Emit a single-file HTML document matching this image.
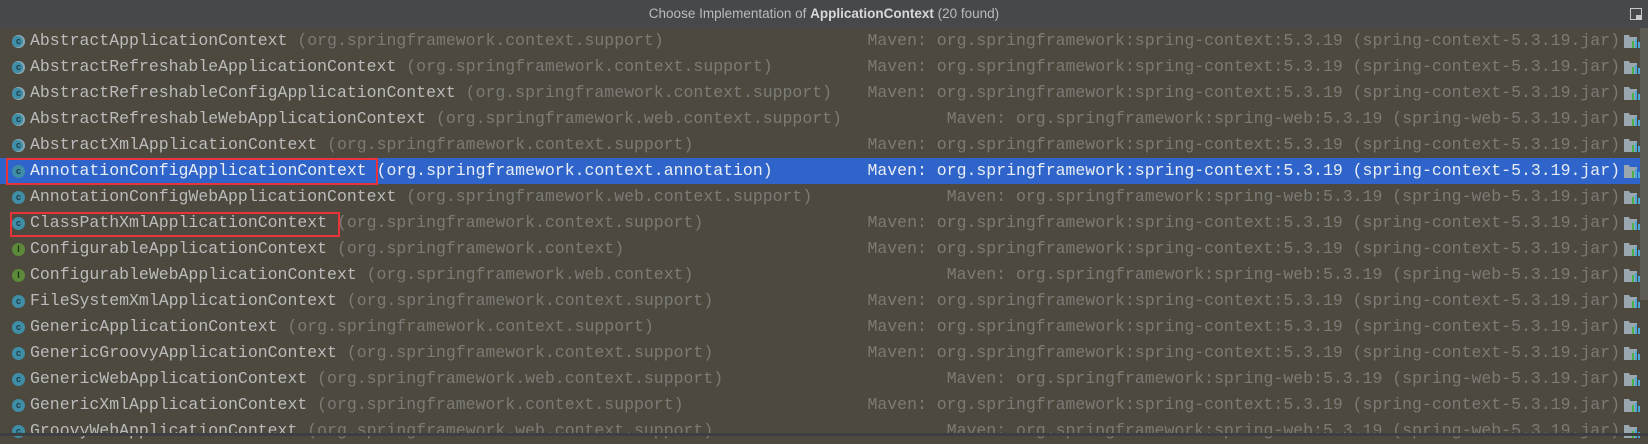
<!DOCTYPE html>
<html><head><meta charset="utf-8"><style>
*{margin:0;padding:0;box-sizing:border-box}
body{width:1648px;height:436px;overflow:hidden;background:#4d493f;position:relative;font-family:"Liberation Mono",monospace}
.hdr{position:absolute;left:0;top:0;width:1648px;height:28px;background:#46484c;color:#b9bbbe;font:13.5px "Liberation Sans","DejaVu Sans",sans-serif;text-align:center;line-height:28px}
.hdr b{color:#d8d8d8}
.pin{position:absolute;left:1630px;top:8px;width:12px;height:12px;border:1.5px solid #c8c8c8}
.pin:after{content:"";position:absolute;right:0;bottom:0;width:5px;height:4px;background:#c8c8c8}
.sb{position:absolute;left:1640px;top:28px;width:8px;height:272px;background:#5e5b54}
.bot{position:absolute;left:0;top:433px;width:1648px;height:3px;background:#3c3f41}
.row{position:absolute;left:0;width:1640px;height:26px;font-size:16.5px;line-height:26px;white-space:pre;color:#bbbbbb}
.row .n{position:absolute;left:30px}
.row .p{color:#7b7a74}
.row .r{position:absolute;right:20px;color:#7b7a74}
.sel{background:#2f65ca}
.sel .n,.sel .p,.sel .r{color:#e8ecf4}
.ic{position:absolute;left:12px;top:7px;width:13px;height:13px;border-radius:50%;background:#3d8ea6;color:#1d3a44;font:bold 9px "Liberation Sans",sans-serif;text-align:center;line-height:13px}
.ic.i{background:#5c8a3a;color:#1f3010}
.ic.a{box-shadow:-1px 0 0 1px #8aa6b0 inset}
.jar{position:absolute;right:0;top:6px;width:16px;height:14px}
.box{position:absolute;border:2px solid #e8333a}
</style></head><body>
<div class="hdr">Choose Implementation of <b>ApplicationContext</b> (20 found)</div>
<div class="pin"></div>
<div class="sb"></div>

<div class="row" style="top:28px"><span class="ic a">c</span><span class="n">AbstractApplicationContext <span class="p">(org.springframework.context.support)</span></span><span class="r">Maven: org.springframework:spring-context:5.3.19 (spring-context-5.3.19.jar)</span><svg class="jar" viewBox="0 0 16 14"><path d="M0 1h5l1 2h7v11H0z" fill="#9aa7b0"/><rect x="8" y="7" width="2" height="7" fill="#4ab04a"/><rect x="11" y="5" width="2" height="9" fill="#4aa8d8"/><rect x="14" y="8" width="2" height="6" fill="#4aa8d8"/></svg></div>
<div class="row" style="top:54px"><span class="ic a">c</span><span class="n">AbstractRefreshableApplicationContext <span class="p">(org.springframework.context.support)</span></span><span class="r">Maven: org.springframework:spring-context:5.3.19 (spring-context-5.3.19.jar)</span><svg class="jar" viewBox="0 0 16 14"><path d="M0 1h5l1 2h7v11H0z" fill="#9aa7b0"/><rect x="8" y="7" width="2" height="7" fill="#4ab04a"/><rect x="11" y="5" width="2" height="9" fill="#4aa8d8"/><rect x="14" y="8" width="2" height="6" fill="#4aa8d8"/></svg></div>
<div class="row" style="top:80px"><span class="ic a">c</span><span class="n">AbstractRefreshableConfigApplicationContext <span class="p">(org.springframework.context.support)</span></span><span class="r">Maven: org.springframework:spring-context:5.3.19 (spring-context-5.3.19.jar)</span><svg class="jar" viewBox="0 0 16 14"><path d="M0 1h5l1 2h7v11H0z" fill="#9aa7b0"/><rect x="8" y="7" width="2" height="7" fill="#4ab04a"/><rect x="11" y="5" width="2" height="9" fill="#4aa8d8"/><rect x="14" y="8" width="2" height="6" fill="#4aa8d8"/></svg></div>
<div class="row" style="top:106px"><span class="ic a">c</span><span class="n">AbstractRefreshableWebApplicationContext <span class="p">(org.springframework.web.context.support)</span></span><span class="r">Maven: org.springframework:spring-web:5.3.19 (spring-web-5.3.19.jar)</span><svg class="jar" viewBox="0 0 16 14"><path d="M0 1h5l1 2h7v11H0z" fill="#9aa7b0"/><rect x="8" y="7" width="2" height="7" fill="#4ab04a"/><rect x="11" y="5" width="2" height="9" fill="#4aa8d8"/><rect x="14" y="8" width="2" height="6" fill="#4aa8d8"/></svg></div>
<div class="row" style="top:132px"><span class="ic a">c</span><span class="n">AbstractXmlApplicationContext <span class="p">(org.springframework.context.support)</span></span><span class="r">Maven: org.springframework:spring-context:5.3.19 (spring-context-5.3.19.jar)</span><svg class="jar" viewBox="0 0 16 14"><path d="M0 1h5l1 2h7v11H0z" fill="#9aa7b0"/><rect x="8" y="7" width="2" height="7" fill="#4ab04a"/><rect x="11" y="5" width="2" height="9" fill="#4aa8d8"/><rect x="14" y="8" width="2" height="6" fill="#4aa8d8"/></svg></div>
<div class="row sel" style="top:158px"><span class="ic">c</span><span class="n">AnnotationConfigApplicationContext <span class="p">(org.springframework.context.annotation)</span></span><span class="r">Maven: org.springframework:spring-context:5.3.19 (spring-context-5.3.19.jar)</span><svg class="jar" viewBox="0 0 16 14"><path d="M0 1h5l1 2h7v11H0z" fill="#9aa7b0"/><rect x="8" y="7" width="2" height="7" fill="#4ab04a"/><rect x="11" y="5" width="2" height="9" fill="#4aa8d8"/><rect x="14" y="8" width="2" height="6" fill="#4aa8d8"/></svg></div>
<div class="row" style="top:184px"><span class="ic">c</span><span class="n">AnnotationConfigWebApplicationContext <span class="p">(org.springframework.web.context.support)</span></span><span class="r">Maven: org.springframework:spring-web:5.3.19 (spring-web-5.3.19.jar)</span><svg class="jar" viewBox="0 0 16 14"><path d="M0 1h5l1 2h7v11H0z" fill="#9aa7b0"/><rect x="8" y="7" width="2" height="7" fill="#4ab04a"/><rect x="11" y="5" width="2" height="9" fill="#4aa8d8"/><rect x="14" y="8" width="2" height="6" fill="#4aa8d8"/></svg></div>
<div class="row" style="top:210px"><span class="ic">c</span><span class="n">ClassPathXmlApplicationContext <span class="p">(org.springframework.context.support)</span></span><span class="r">Maven: org.springframework:spring-context:5.3.19 (spring-context-5.3.19.jar)</span><svg class="jar" viewBox="0 0 16 14"><path d="M0 1h5l1 2h7v11H0z" fill="#9aa7b0"/><rect x="8" y="7" width="2" height="7" fill="#4ab04a"/><rect x="11" y="5" width="2" height="9" fill="#4aa8d8"/><rect x="14" y="8" width="2" height="6" fill="#4aa8d8"/></svg></div>
<div class="row" style="top:236px"><span class="ic i">I</span><span class="n">ConfigurableApplicationContext <span class="p">(org.springframework.context)</span></span><span class="r">Maven: org.springframework:spring-context:5.3.19 (spring-context-5.3.19.jar)</span><svg class="jar" viewBox="0 0 16 14"><path d="M0 1h5l1 2h7v11H0z" fill="#9aa7b0"/><rect x="8" y="7" width="2" height="7" fill="#4ab04a"/><rect x="11" y="5" width="2" height="9" fill="#4aa8d8"/><rect x="14" y="8" width="2" height="6" fill="#4aa8d8"/></svg></div>
<div class="row" style="top:262px"><span class="ic i">I</span><span class="n">ConfigurableWebApplicationContext <span class="p">(org.springframework.web.context)</span></span><span class="r">Maven: org.springframework:spring-web:5.3.19 (spring-web-5.3.19.jar)</span><svg class="jar" viewBox="0 0 16 14"><path d="M0 1h5l1 2h7v11H0z" fill="#9aa7b0"/><rect x="8" y="7" width="2" height="7" fill="#4ab04a"/><rect x="11" y="5" width="2" height="9" fill="#4aa8d8"/><rect x="14" y="8" width="2" height="6" fill="#4aa8d8"/></svg></div>
<div class="row" style="top:288px"><span class="ic">c</span><span class="n">FileSystemXmlApplicationContext <span class="p">(org.springframework.context.support)</span></span><span class="r">Maven: org.springframework:spring-context:5.3.19 (spring-context-5.3.19.jar)</span><svg class="jar" viewBox="0 0 16 14"><path d="M0 1h5l1 2h7v11H0z" fill="#9aa7b0"/><rect x="8" y="7" width="2" height="7" fill="#4ab04a"/><rect x="11" y="5" width="2" height="9" fill="#4aa8d8"/><rect x="14" y="8" width="2" height="6" fill="#4aa8d8"/></svg></div>
<div class="row" style="top:314px"><span class="ic">c</span><span class="n">GenericApplicationContext <span class="p">(org.springframework.context.support)</span></span><span class="r">Maven: org.springframework:spring-context:5.3.19 (spring-context-5.3.19.jar)</span><svg class="jar" viewBox="0 0 16 14"><path d="M0 1h5l1 2h7v11H0z" fill="#9aa7b0"/><rect x="8" y="7" width="2" height="7" fill="#4ab04a"/><rect x="11" y="5" width="2" height="9" fill="#4aa8d8"/><rect x="14" y="8" width="2" height="6" fill="#4aa8d8"/></svg></div>
<div class="row" style="top:340px"><span class="ic">c</span><span class="n">GenericGroovyApplicationContext <span class="p">(org.springframework.context.support)</span></span><span class="r">Maven: org.springframework:spring-context:5.3.19 (spring-context-5.3.19.jar)</span><svg class="jar" viewBox="0 0 16 14"><path d="M0 1h5l1 2h7v11H0z" fill="#9aa7b0"/><rect x="8" y="7" width="2" height="7" fill="#4ab04a"/><rect x="11" y="5" width="2" height="9" fill="#4aa8d8"/><rect x="14" y="8" width="2" height="6" fill="#4aa8d8"/></svg></div>
<div class="row" style="top:366px"><span class="ic">c</span><span class="n">GenericWebApplicationContext <span class="p">(org.springframework.web.context.support)</span></span><span class="r">Maven: org.springframework:spring-web:5.3.19 (spring-web-5.3.19.jar)</span><svg class="jar" viewBox="0 0 16 14"><path d="M0 1h5l1 2h7v11H0z" fill="#9aa7b0"/><rect x="8" y="7" width="2" height="7" fill="#4ab04a"/><rect x="11" y="5" width="2" height="9" fill="#4aa8d8"/><rect x="14" y="8" width="2" height="6" fill="#4aa8d8"/></svg></div>
<div class="row" style="top:392px"><span class="ic">c</span><span class="n">GenericXmlApplicationContext <span class="p">(org.springframework.context.support)</span></span><span class="r">Maven: org.springframework:spring-context:5.3.19 (spring-context-5.3.19.jar)</span><svg class="jar" viewBox="0 0 16 14"><path d="M0 1h5l1 2h7v11H0z" fill="#9aa7b0"/><rect x="8" y="7" width="2" height="7" fill="#4ab04a"/><rect x="11" y="5" width="2" height="9" fill="#4aa8d8"/><rect x="14" y="8" width="2" height="6" fill="#4aa8d8"/></svg></div>
<div class="row" style="top:418px"><span class="ic">c</span><span class="n">GroovyWebApplicationContext <span class="p">(org.springframework.web.context.support)</span></span><span class="r">Maven: org.springframework:spring-web:5.3.19 (spring-web-5.3.19.jar)</span><svg class="jar" viewBox="0 0 16 14"><path d="M0 1h5l1 2h7v11H0z" fill="#9aa7b0"/><rect x="8" y="7" width="2" height="7" fill="#4ab04a"/><rect x="11" y="5" width="2" height="9" fill="#4aa8d8"/><rect x="14" y="8" width="2" height="6" fill="#4aa8d8"/></svg></div>

<div class="bot"></div>
<div class="box" style="left:6px;top:158px;width:372px;height:27px"></div>
<div class="box" style="left:10px;top:212px;width:330px;height:25px"></div>
</body></html>
